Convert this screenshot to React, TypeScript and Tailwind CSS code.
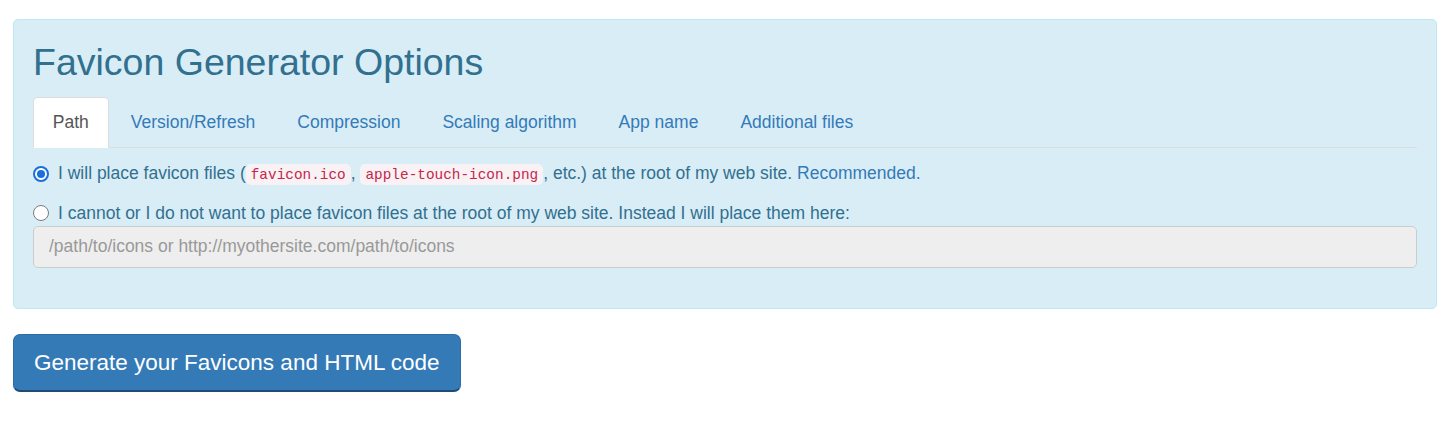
import React from 'react';

const TABS = ['Path', 'Version/Refresh', 'Compression', 'Scaling algorithm', 'App name', 'Additional files'];

const Radio: React.FC<{ checked?: boolean }> = ({ checked }) =>
  checked ? (
    <span className="mr-[9px] flex h-[16px] w-[16px] shrink-0 items-center justify-center rounded-full border-[2px] border-[#1a6fd8] bg-white">
      <span className="h-[8px] w-[8px] rounded-full bg-[#1a6fd8]" />
    </span>
  ) : (
    <span className="mr-[9px] h-[16px] w-[16px] shrink-0 rounded-full border-[1.5px] border-[#7a7a80] bg-white" />
  );

const Code: React.FC<{ children: React.ReactNode }> = ({ children }) => (
  <code className="rounded-[5px] bg-[#f9f2f4] px-[5px] py-[2.5px] font-['Liberation_Mono',monospace] text-[14.4px] text-[#c7254e]">
    {children}
  </code>
);

const App: React.FC = () => {
  return (
    <div className="min-h-screen bg-white pt-[19px] pl-[13px] pr-[16px] font-['Liberation_Sans',Arial,sans-serif]">
      {/* Options panel */}
      <div className="rounded-[5px] border border-[#bce8f1] bg-[#d9edf7] px-[19px] pt-[22px] pb-[40px] text-[#31708f]">
        <h2 className="mb-[14px] text-[37.5px] leading-[41.25px]">Favicon Generator Options</h2>

        {/* Tabs */}
        <ul className="flex border-b border-[#ddd]">
          {TABS.map((tab, idx) => (
            <li key={tab} className="-mb-px mr-[2.5px]">
              <a
                href="#"
                className={
                  idx === 0
                    ? 'block rounded-t-[5px] border border-[#ddd] border-b-transparent bg-white px-[18.75px] py-[12px] text-[17.5px] leading-[25px] text-[#555]'
                    : 'block rounded-t-[5px] border border-transparent px-[18.75px] py-[12px] text-[17.5px] leading-[25px] text-[#337ab7]'
                }
              >
                {tab}
              </a>
            </li>
          ))}
        </ul>

        {/* Path options */}
        <label className="mt-[12.5px] flex items-center text-[17.5px] leading-[25px]">
          <Radio checked />
          <span>
            I will place favicon files (<Code>favicon.ico</Code>, <Code>apple-touch-icon.png</Code>, etc.) at the root of my web
            site. <a href="#" className="text-[#337ab7]">Recommended.</a>
          </span>
        </label>
        <label className="mt-[13px] flex items-center text-[17.5px] leading-[25px]">
          <Radio />
          <span>I cannot or I do not want to place favicon files at the root of my web site. Instead I will place them here:</span>
        </label>
        <input
          disabled
          placeholder="/path/to/icons or http://myothersite.com/path/to/icons"
          className="block h-[42px] w-full rounded-[5px] border border-[#ccc] bg-[#eee] px-[15px] text-[17.5px] placeholder:text-[#999]"
        />
      </div>

      <button className="mt-[25px] rounded-[7px] border border-[#2e6da4] border-b-[2px] border-b-[#1f4c74] bg-[#337ab7] px-[20px] pt-[13px] pb-[12px] text-[22.5px] leading-[30px] text-white">
        Generate your Favicons and HTML code
      </button>
    </div>
  );
};

export default App;
